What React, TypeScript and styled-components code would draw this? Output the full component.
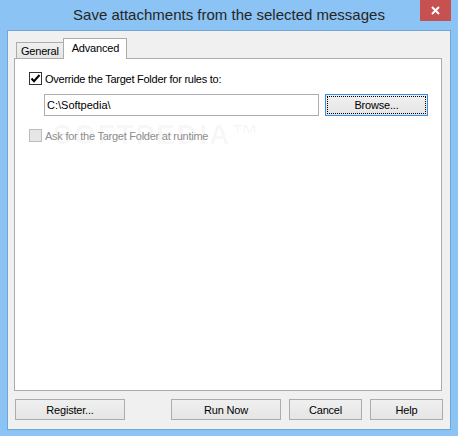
import React from "react";
import styled, { createGlobalStyle } from "styled-components";

const GlobalStyle = createGlobalStyle`
  html, body {
    margin: 0;
    padding: 0;
    background: #8bc3f4;
  }
  body {
    font-family: "Liberation Sans", Arial, sans-serif;
    -webkit-font-smoothing: antialiased;
  }
`;

const Window = styled.div`
  width: 458px;
  height: 436px;
  box-sizing: border-box;
  background: #8bc3f4;
  display: flex;
  flex-direction: column;
  padding: 0 7px 6px 7px;
`;

const TitleBar = styled.div`
  height: 30px;
  margin: 0 -7px;
  display: grid;
  grid-template-columns: 1fr auto 1fr;
  align-items: start;
`;

const Title = styled.div`
  grid-column: 2;
  font-size: 15px;
  line-height: 30px;
  color: #262626;
  white-space: nowrap;
`;

const CloseButton = styled.div`
  grid-column: 3;
  justify-self: end;
  margin-right: 7px;
  width: 31px;
  height: 21px;
  background: #c75050;
  display: flex;
  align-items: center;
  justify-content: center;
`;

const Client = styled.div`
  flex: 1;
  min-height: 0;
  background: #f0f0f0;
  border: 1px solid #72a6d8;
  display: flex;
  flex-direction: column;
  padding: 7px 8px 9px 6px;
`;

const TabStrip = styled.div`
  height: 20px;
  display: flex;
  align-items: flex-end;
  padding-left: 2px;
`;

const Tab = styled.div<{ $active?: boolean }>`
  box-sizing: border-box;
  position: relative;
  z-index: ${(p) => (p.$active ? 1 : 0)};
  height: ${(p) => (p.$active ? 21 : 16)}px;
  margin-bottom: ${(p) => (p.$active ? -1 : 0)}px;
  margin-left: ${(p) => (p.$active ? -1 : 0)}px;
  padding: ${(p) => (p.$active ? "0 7px 2px 8px" : "0 4px")};
  border: 1px solid #acacac;
  border-bottom: none;
  background: ${(p) =>
    p.$active ? "#ffffff" : "linear-gradient(#f0f0f0, #e5e5e5)"};
  font-size: 11px;
  letter-spacing: -0.2px;
  color: #000;
  display: flex;
  align-items: center;
  justify-content: center;
`;

const Panel = styled.div`
  position: relative;
  flex: 1;
  min-height: 0;
  box-sizing: border-box;
  background: #ffffff;
  border: 1px solid #acacac;
  padding: 13px 0 0 14px;
  display: flex;
  flex-direction: column;
`;

const CheckRow = styled.div<{ $disabled?: boolean }>`
  position: relative;
  z-index: 1;
  height: 13px;
  display: flex;
  align-items: center;
  gap: 3px;
  font-size: 11px;
  letter-spacing: -0.25px;
  color: ${(p) => (p.$disabled ? "#8d8d8d" : "#000")};
`;

const Box = styled.div<{ $disabled?: boolean }>`
  width: 13px;
  height: 13px;
  box-sizing: border-box;
  border: 1px solid ${(p) => (p.$disabled ? "#bcbcbc" : "#333333")};
  background: ${(p) => (p.$disabled ? "#e6e6e6" : "#ffffff")};
  display: flex;
  align-items: center;
  justify-content: center;
`;

const InputRow = styled.div`
  display: flex;
  gap: 6px;
  margin: 9px 0 13px 15px;
`;

const TextBox = styled.div`
  width: 275px;
  height: 22px;
  box-sizing: border-box;
  border: 1px solid #abadb3;
  background: #fff;
  padding: 0 2px;
  font-size: 11px;
  line-height: 20px;
  color: #000;
`;

const Button = styled.div<{ $w: number; $focused?: boolean; $h?: number }>`
  width: ${(p) => p.$w}px;
  height: ${(p) => p.$h ?? 21}px;
  box-sizing: border-box;
  border: 1px solid ${(p) => (p.$focused ? "#3c8de0" : "#acacac")};
  background: linear-gradient(#f0f0f0, #e5e5e5);
  font-size: 11px;
  letter-spacing: -0.2px;
  color: #000;
  display: flex;
  align-items: center;
  justify-content: center;
  outline: ${(p) => (p.$focused ? "1px dotted #000" : "none")};
  outline-offset: -3px;
`;

const ButtonRow = styled.div`
  display: flex;
  gap: 8px;
  margin: 8px -1px 0 0;
  padding-left: 1px;
`;

const LeftGroup = styled.div`
  flex: 1;
  display: flex;
`;

const Watermark = styled.div`
  position: absolute;
  left: 38px;
  top: 62px;
  display: flex;
  flex-direction: column;
  align-items: center;
  color: rgba(0, 0, 0, 0.035);
  pointer-events: none;
`;

const WatermarkBig = styled.div`
  font-size: 28px;
  font-weight: bold;
  letter-spacing: 2px;
  line-height: 28px;
`;

const WatermarkSmall = styled.div`
  font-size: 9px;
  line-height: 10px;
  margin-left: 20px;
`;

const Check = () => (
  <svg width="11" height="11" viewBox="0 0 11 11">
    <path d="M1.5 5.5 L4 8.2 L9.5 2" stroke="#000" strokeWidth="2" fill="none" />
  </svg>
);

export default function App() {
  return (
    <>
      <GlobalStyle />
      <Window>
        <TitleBar>
          <Title>Save attachments from the selected messages</Title>
          <CloseButton>
            <svg width="9" height="9" viewBox="0 0 9 9">
              <path d="M1 1 L8 8 M8 1 L1 8" stroke="#fff" strokeWidth="2" />
            </svg>
          </CloseButton>
        </TitleBar>
        <Client>
          <TabStrip>
            <Tab>General</Tab>
            <Tab $active>Advanced</Tab>
          </TabStrip>
          <Panel>
            <CheckRow>
              <Box>
                <Check />
              </Box>
              <span>Override the Target Folder for rules to:</span>
            </CheckRow>
            <InputRow>
              <TextBox>C:\Softpedia\</TextBox>
              <Button $w={103} $h={22} $focused>
                Browse...
              </Button>
            </InputRow>
            <CheckRow $disabled>
              <Box $disabled />
              <span>Ask for the Target Folder at runtime</span>
            </CheckRow>
            <Watermark>
              <WatermarkBig>SOFTPEDIA™</WatermarkBig>
              <WatermarkSmall>www.softpedia.com</WatermarkSmall>
            </Watermark>
          </Panel>
          <ButtonRow>
            <LeftGroup>
              <Button $w={110}>Register...</Button>
            </LeftGroup>
            <Button $w={110}>Run Now</Button>
            <Button $w={73}>Cancel</Button>
            <Button $w={73}>Help</Button>
          </ButtonRow>
        </Client>
      </Window>
    </>
  );
}
